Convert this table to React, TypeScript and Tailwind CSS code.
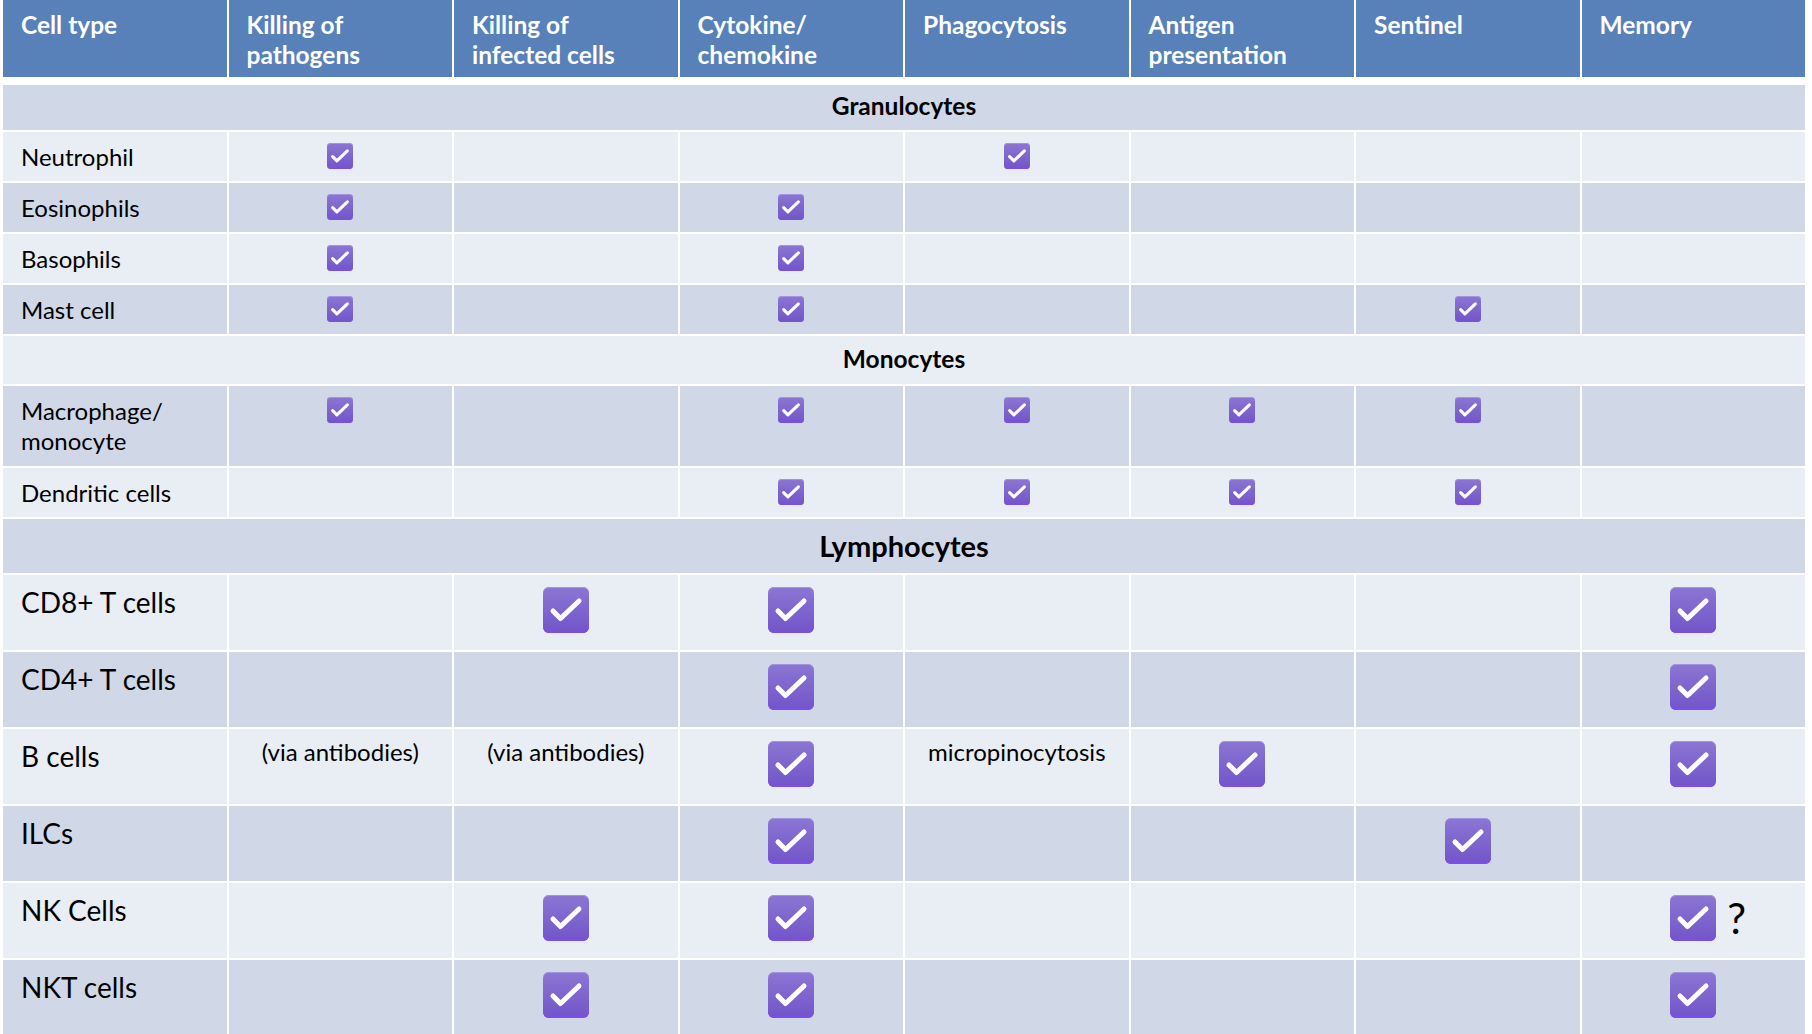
import React from "react";

type Cell = null | "check" | "checkq" | string;

type Row =
  | { kind: "group"; label: string; big?: boolean; h: string; dark: boolean }
  | {
      kind: "data";
      label: string[];
      cells: Cell[];
      big?: boolean;
      h: string;
      dark: boolean;
    };

const HEADERS: string[][] = [
  ["Cell type"],
  ["Killing of", "pathogens"],
  ["Killing of", "infected cells"],
  ["Cytokine/", "chemokine"],
  ["Phagocytosis"],
  ["Antigen", "presentation"],
  ["Sentinel"],
  ["Memory"],
];

const C = "check";

const ROWS: Row[] = [
  { kind: "group", label: "Granulocytes", h: "h-[45px]", dark: true },
  { kind: "data", label: ["Neutrophil"], cells: [C, null, null, C, null, null, null], h: "h-[49px]", dark: false },
  { kind: "data", label: ["Eosinophils"], cells: [C, null, C, null, null, null, null], h: "h-[49px]", dark: true },
  { kind: "data", label: ["Basophils"], cells: [C, null, C, null, null, null, null], h: "h-[49px]", dark: false },
  { kind: "data", label: ["Mast cell"], cells: [C, null, C, null, null, C, null], h: "h-[49px]", dark: true },
  { kind: "group", label: "Monocytes", h: "h-[48px]", dark: false },
  { kind: "data", label: ["Macrophage/", "monocyte"], cells: [C, null, C, C, C, C, null], h: "h-[80px]", dark: true },
  { kind: "data", label: ["Dendritic cells"], cells: [null, null, C, C, C, C, null], h: "h-[49px]", dark: false },
  { kind: "group", label: "Lymphocytes", big: true, h: "h-[54px]", dark: true },
  { kind: "data", label: ["CD8+ T cells"], cells: [null, C, C, null, null, null, C], big: true, h: "h-[75px]", dark: false },
  { kind: "data", label: ["CD4+ T cells"], cells: [null, null, C, null, null, null, C], big: true, h: "h-[75px]", dark: true },
  {
    kind: "data",
    label: ["B cells"],
    cells: ["(via antibodies)", "(via antibodies)", C, "micropinocytosis", C, null, C],
    big: true,
    h: "h-[75px]",
    dark: false,
  },
  { kind: "data", label: ["ILCs"], cells: [null, null, C, null, null, C, null], big: true, h: "h-[75px]", dark: true },
  { kind: "data", label: ["NK Cells"], cells: [null, C, C, null, null, null, "checkq"], big: true, h: "h-[75px]", dark: false },
  { kind: "data", label: ["NKT cells"], cells: [null, C, C, null, null, null, C], big: true, h: "h-[74px]", dark: true },
];

function CheckBox({ big }: { big?: boolean }) {
  return (
    <span
      className={`inline-block bg-linear-to-b from-[#8b76d3] to-[#7254c9] ${
        big
          ? "h-[46px] w-[46px] rounded-[6px] shadow-[inset_0_-2px_0_#7c4cf0,inset_0_1px_0_#a393e0]"
          : "h-[26px] w-[26px] rounded-[4px] shadow-[inset_0_-1px_0_#7c4cf0,inset_0_1px_0_#a393e0]"
      }`}
    >
      <svg viewBox="0 0 46 46" className="h-full w-full">
        <path
          d="M10 24 L17.5 31.5 L36 14"
          fill="none"
          stroke="#ffffff"
          strokeWidth={big ? 5 : 5.5}
          strokeLinecap="round"
          strokeLinejoin="round"
        />
      </svg>
    </span>
  );
}

function DataCell({ cell, big, bg }: { cell: Cell; big?: boolean; bg: string }) {
  if (cell === "check" || cell === "checkq") {
    return (
      <div className={`flex justify-center ${bg} ${big ? "pt-[12px]" : "pt-[11px]"}`}>
        <span className="relative">
          <CheckBox big={big} />
          {cell === "checkq" && (
            <span className="absolute left-[57px] top-[-3px] text-[42px] leading-[52px] text-black">?</span>
          )}
        </span>
      </div>
    );
  }
  if (cell) {
    return (
      <div className={`${bg} pt-[8px] text-center text-[24px] leading-[30px] text-black`}>{cell}</div>
    );
  }
  return <div className={bg} />;
}

export default function App() {
  return (
    <div
      className="h-[1034px] w-[1812px] overflow-hidden bg-white pl-[3px]"
      style={{ fontFamily: "Lato, 'Open Sans', sans-serif" }}
    >
      <div className="flex w-[1802px] flex-col gap-[2px]">
        <div className="mb-[6px] grid h-[77px] grid-cols-8 gap-[2px]">
          {HEADERS.map((lines, i) => (
            <div
              key={i}
              className="bg-[#5880b9] pl-[18px] pt-[10px] text-[24.5px] font-bold leading-[30px] text-white"
            >
              {lines.map((l) => (
                <div key={l}>{l}</div>
              ))}
            </div>
          ))}
        </div>

        {ROWS.map((row, ri) => {
          const bg = row.dark ? "bg-[#d0d8e8]" : "bg-[#e9edf4]";
          if (row.kind === "group") {
            return (
              <div
                key={ri}
                className={`flex items-center justify-center font-bold text-black ${bg} ${row.h} ${
                  row.big ? "text-[29px] leading-[34px]" : "pb-[3px] text-[24.5px] leading-[28px]"
                }`}
              >
                {row.label}
              </div>
            );
          }
          return (
            <div key={ri} className={`grid grid-cols-8 gap-[2px] ${row.h}`}>
              <div
                className={`${bg} pl-[18px] text-black ${
                  row.big ? "pt-[9px] text-[28px] leading-[36px]" : "pt-[10px] text-[24px] leading-[30px]"
                }`}
              >
                {row.label.map((l) => (
                  <div key={l}>{l}</div>
                ))}
              </div>
              {row.cells.map((c, ci) => (
                <DataCell key={ci} cell={c} big={row.big} bg={bg} />
              ))}
            </div>
          );
        })}
      </div>
    </div>
  );
}
